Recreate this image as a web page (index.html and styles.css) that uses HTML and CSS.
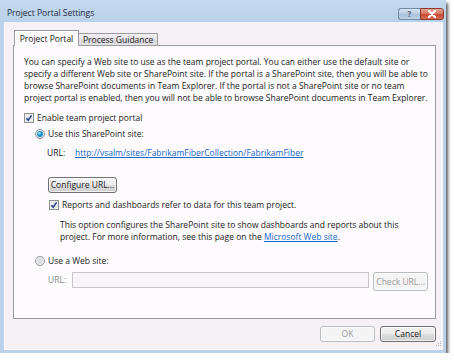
FILE: index.html
```html
<!DOCTYPE html>
<html lang="en">
    <head>
        <meta charset="UTF-8" />
        <title>Project Portal Settings</title>
        <link rel="stylesheet" href="styles.css">
    </head>
    <body>
        <div class="window">
            <div class="titlebar">
                <span class="title">Project Portal Settings</span>
                <span class="cap-btn help">?</span>
                <span class="cap-btn close">
                    <svg width="10" height="8" viewBox="0 0 10 8">
                        <path d="M2 1 L8 7 M8 1 L2 7" stroke="#fff" stroke-width="2.2" stroke-linecap="round" />
                    </svg>
                </span>
            </div>

            <div class="client">
                <div class="tabs">
                    <div class="tab active">Project Portal</div>
                    <div class="tab">Process Guidance</div>
                </div>

                <div class="panel">
                    <p class="intro">You can specify a Web site to use as the team project portal. You can either use the default site or specify a different Web site or SharePoint site. If the portal is a SharePoint site, then you will be able to browse SharePoint documents in Team Explorer. If the portal is not a SharePoint site or no team project portal is enabled, then you will not be able to browse SharePoint documents in Team Explorer.</p>

                    <div class="option enable">
                        <svg class="box" width="10" height="10" viewBox="0 0 10 10">
                            <rect x="0.5" y="0.5" width="9" height="9" fill="#f4f4f4" stroke="#8e8f8f" />
                            <rect x="1.5" y="1.5" width="7" height="7" fill="#e6e7ea" />
                            <path d="M2.4 5.2 L4.2 7.2 L7.6 2.4" fill="none" stroke="#263e8a" stroke-width="1.5" />
                        </svg>
                        <span>Enable team project portal</span>
                    </div>

                    <div class="option radio-sp">
                        <svg class="box" width="10" height="10" viewBox="0 0 10 10">
                            <circle cx="5" cy="5" r="4.5" fill="#eef0f2" stroke="#8e8f8f" />
                            <circle cx="5" cy="5" r="3" fill="#1d8fd6" />
                            <circle cx="4.4" cy="4.3" r="1.3" fill="#8fe0fb" />
                        </svg>
                        <span>Use this SharePoint site:</span>
                    </div>

                    <div class="url-row">
                        <span class="url-label">URL:</span>
                        <a href="#">http://vsalm/sites/FabrikamFiberCollection/FabrikamFiber</a>
                    </div>

                    <button class="btn configure">Configure URL...</button>

                    <div class="option reports">
                        <svg class="box" width="10" height="10" viewBox="0 0 10 10">
                            <rect x="0.5" y="0.5" width="9" height="9" fill="#f4f4f4" stroke="#8e8f8f" />
                            <rect x="1.5" y="1.5" width="7" height="7" fill="#e6e7ea" />
                            <path d="M2.4 5.2 L4.2 7.2 L7.6 2.4" fill="none" stroke="#263e8a" stroke-width="1.5" />
                        </svg>
                        <span>Reports and dashboards refer to data for this team project.</span>
                    </div>

                    <p class="note">This option configures the SharePoint site to show dashboards and reports about this project. For more information, see this page on the <a href="#">Microsoft Web site</a>.</p>

                    <div class="option radio-web">
                        <svg class="box" width="10" height="10" viewBox="0 0 10 10">
                            <circle cx="5" cy="5" r="4.5" fill="#e9eaec" stroke="#9a9b9c" />
                            <circle cx="5" cy="5" r="3" fill="#dcdee1" />
                        </svg>
                        <span>Use a Web site:</span>
                    </div>

                    <div class="web-row">
                        <span class="url-label disabled">URL:</span>
                        <span class="input"></span>
                        <button class="btn check" disabled>Check URL...</button>
                    </div>
                </div>

                <div class="footer">
                    <button class="btn ok" disabled>OK</button>
                    <button class="btn cancel">Cancel</button>
                </div>

                <svg class="grip" width="7" height="7" viewBox="0 0 7 7">
                    <rect x="5" y="1" width="1" height="1" fill="#b4b4b4" />
                    <rect x="3" y="3" width="1" height="1" fill="#b4b4b4" />
                    <rect x="5" y="3" width="1" height="1" fill="#b4b4b4" />
                    <rect x="1" y="5" width="1" height="1" fill="#b4b4b4" />
                    <rect x="3" y="5" width="1" height="1" fill="#b4b4b4" />
                    <rect x="5" y="5" width="1" height="1" fill="#b4b4b4" />
                </svg>
            </div>
        </div>
    </body>
</html>
```

FILE: styles.css
```css
:root {
    --frame: #b9d1ea;
    --client: #f5f1f4;
    --panel: #fdfbfd;
    --border: #9a9ca3;
    --text: #1b1b1b;
    --muted: #8a8a8a;
    --link: #1669c9;
}

* {
    margin: 0;
    padding: 0;
    box-sizing: border-box;
}

body {
    font-family: "Open Sans", "DejaVu Sans", sans-serif;
    font-size: 8.5px;
    line-height: 12px;
    color: var(--text);
    background: #ffffff;
}

.window {
    width: 446px;
    height: 353px;
    display: flex;
    flex-direction: column;
    background: linear-gradient(#c4d9ef, var(--frame) 22px);
    box-shadow: 2px 3px 3px rgba(0, 0, 0, 0.65);
}

/* caption */
.titlebar {
    height: 22px;
    display: flex;
    align-items: flex-start;
    padding: 0 2px 0 7px;
}

.title {
    flex: 1;
    margin-top: 7px;
    color: #1e2a38;
}

.cap-btn {
    height: 12px;
    margin-top: 8px;
    display: flex;
    align-items: center;
    justify-content: center;
    border: 1px solid #6f8aa6;
    border-radius: 3px;
}

.help {
    width: 22px;
    border-right: none;
    border-radius: 3px 0 0 3px;
    background: linear-gradient(#d9e6f4, #b7cbe2 50%, #a8bfda 51%, #bcd2ea);
    color: #4a5c72;
    font-weight: bold;
    font-size: 8px;
}

.close {
    width: 24px;
    border-color: #8d3a2e;
    border-radius: 0 3px 3px 0;
    background: linear-gradient(#e8a493, #d47560 50%, #c5472f 51%, #d96f52);
}

/* client area */
.client {
    position: relative;
    flex: 1;
    margin: 0 3px 3px 4px;
    padding: 8px 6px 0 8px;
    background: var(--client);
    border: 1px solid #fbf9fb;
    border-top: none;
}

.tabs {
    position: relative;
    display: flex;
    align-items: flex-end;
    height: 16px;
    margin-bottom: -1px;
    padding-left: 1px;
}

.tab {
    height: 13px;
    padding: 0 4px;
    border: 1px solid var(--border);
    border-left: none;
    background: linear-gradient(#f2f0f2, #e4e2e4 50%, #d9d7da 51%, #e2e0e2);
    line-height: 11px;
}

.tab.active {
    height: 16px;
    width: 65px;
    border-left: 1px solid var(--border);
    border-bottom: none;
    background: var(--panel);
    line-height: 15px;
    text-align: center;
}

.panel {
    height: 274px;
    padding: 10px 7px 0 10px;
    background: var(--panel);
    border: 1px solid var(--border);
}

.intro {
    width: 404px;
}

.option {
    display: flex;
    align-items: center;
    gap: 3px;
    height: 12px;
}

.option .box {
    flex: none;
}

.enable {
    margin-top: 8px;
}

.radio-sp {
    margin: 4px 0 0 11px;
}

.url-row {
    display: flex;
    margin: 7px 0 0 23px;
}

.url-label {
    width: 28px;
}

a {
    color: var(--link);
}

.btn {
    display: block;
    height: 16px;
    padding: 0;
    font: inherit;
    white-space: nowrap;
    color: var(--text);
    border: 1px solid #707070;
    border-radius: 3px;
    background: linear-gradient(#f2f2f2, #ebebeb 50%, #dddddd 51%, #cfcfcf);
    box-shadow: inset 0 0 0 1px rgba(255, 255, 255, 0.7);
}

.btn:disabled {
    color: #9a9a9a;
    border-color: #b8bcbf;
    background: #f4f4f4;
}

.configure {
    width: 69px;
    margin: 18px 0 0 24px;
}

.reports {
    margin: 6px 0 0 25px;
}

.note {
    margin: 8px 0 0 36px;
}

.radio-web {
    margin: 12px 0 0 11px;
}

.web-row {
    display: flex;
    align-items: flex-start;
    margin: 5px 0 0 24px;
}

.disabled {
    color: var(--muted);
    width: 24px;
    line-height: 16px;
}

.input {
    width: 299px;
    height: 16px;
    border: 1px solid #c9c7ca;
    background: #f7f5f7;
}

.check {
    width: 55px;
    height: 19px;
    margin-left: 4px;
}

.footer {
    display: flex;
    justify-content: flex-end;
    gap: 5px;
    margin-top: 7px;
}

.ok {
    width: 55px;
}

.cancel {
    width: 56px;
}

.grip {
    position: absolute;
    right: 0;
    bottom: 2px;
}
```
